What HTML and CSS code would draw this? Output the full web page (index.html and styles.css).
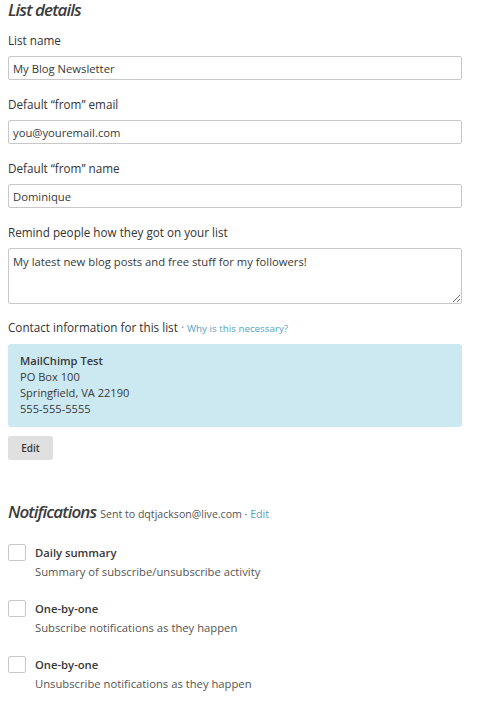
FILE: index.html
```html
<!DOCTYPE html>
<html lang="en">
<head>
    <meta charset="UTF-8">
    <title>List details</title>
    <link rel="stylesheet" href="styles.css">
</head>
<body>
    <h2 class="section-title">List details</h2>

    <div class="field">
        <label class="field-label">List name</label>
        <input class="text-input" type="text" value="My Blog Newsletter">
    </div>
    <div class="field">
        <label class="field-label">Default &ldquo;from&rdquo; email</label>
        <input class="text-input" type="text" value="you@youremail.com">
    </div>
    <div class="field">
        <label class="field-label">Default &ldquo;from&rdquo; name</label>
        <input class="text-input" type="text" value="Dominique">
    </div>
    <div class="field">
        <label class="field-label">Remind people how they got on your list</label>
        <textarea class="text-area">My latest new blog posts and free stuff for my followers!</textarea>
    </div>

    <div class="contact">
        <div class="field-label">Contact information for this list <span class="dot">&middot;</span> <a class="small-link" href="#">Why is this necessary?</a></div>
        <div class="contact-box">
            <strong>MailChimp Test</strong><br>
            PO Box 100<br>
            Springfield, VA 22190<br>
            555-555-5555
        </div>
        <button class="btn">Edit</button>
    </div>

    <div class="notify-head">
        <h2 class="section-title">Notifications</h2>
        <span class="sent">Sent to dqtjackson@live.com &middot; <a class="link" href="#">Edit</a></span>
    </div>

    <div class="check-row">
        <span class="checkbox"></span>
        <div>
            <div class="check-title">Daily summary</div>
            <div class="check-desc">Summary of subscribe/unsubscribe activity</div>
        </div>
    </div>
    <div class="check-row">
        <span class="checkbox"></span>
        <div>
            <div class="check-title">One-by-one</div>
            <div class="check-desc">Subscribe notifications as they happen</div>
        </div>
    </div>
    <div class="check-row">
        <span class="checkbox"></span>
        <div>
            <div class="check-title">One-by-one</div>
            <div class="check-desc">Unsubscribe notifications as they happen</div>
        </div>
    </div>
</body>
</html>
```

FILE: styles.css
```css
body {
    margin: 0;
    padding: 0 33px 0 8px;
    font-family: 'Open Sans', sans-serif;
    font-size: 11.25px;
    color: #383838;
    background: #fff;
}

.section-title {
    margin: 0;
    padding-top: 1px;
    font-size: 17px;
    font-style: italic;
    font-weight: 600;
    letter-spacing: -0.9px;
    color: #3c3c3c;
    line-height: 17px;
}

.field {
    margin-top: 14px;
}

.field + .field {
    margin-top: 16px;
}

.field-label {
    display: block;
    font-size: 11.7px;
    line-height: 17px;
    margin-bottom: 7px;
    color: #333;
}

.text-input,
.text-area {
    display: block;
    box-sizing: border-box;
    width: 100%;
    height: 24px;
    margin: 0;
    padding: 0 4px;
    border: 1px solid #c8c8c8;
    border-radius: 2px;
    font-family: 'Open Sans', sans-serif;
    font-size: 11.25px;
    color: #383838;
}

.text-area {
    height: 56px;
    padding: 5px 4px;
    resize: vertical;
}

.contact {
    margin-top: 15px;
}

.dot {
    color: #888;
}

.small-link {
    font-size: 9.8px;
    color: #52a3c4;
    text-decoration: none;
}

.contact-box {
    background: #cce9f2;
    border-radius: 3px;
    padding: 9px 12px 10px;
    line-height: 16px;
    font-size: 11.1px;
}

.contact-box strong {
    font-weight: 600;
}

.btn {
    display: block;
    margin-top: 9px;
    width: 45px;
    height: 24px;
    border: 0;
    border-radius: 2px;
    background: #e0e0e0;
    font-family: 'Open Sans', sans-serif;
    font-size: 10px;
    font-weight: 600;
    color: #383838;
    padding: 0;
}

.notify-head {
    margin-top: 42px;
    display: flex;
    align-items: baseline;
    gap: 4px;
}

.sent {
    font-size: 10.6px;
    color: #555;
}

.link {
    color: #52a3c4;
    text-decoration: none;
}

.check-row {
    display: flex;
    gap: 9px;
    margin-top: 23px;
}

.check-row + .check-row {
    margin-top: 20px;
}

.checkbox {
    box-sizing: border-box;
    width: 18px;
    height: 17px;
    border: 1px solid #c8c8c8;
    border-radius: 2px;
    flex: none;
}

.check-title {
    font-weight: 600;
    line-height: 17px;
}

.check-desc {
    margin-top: 2px;
    line-height: 17px;
    color: #555;
}
```
